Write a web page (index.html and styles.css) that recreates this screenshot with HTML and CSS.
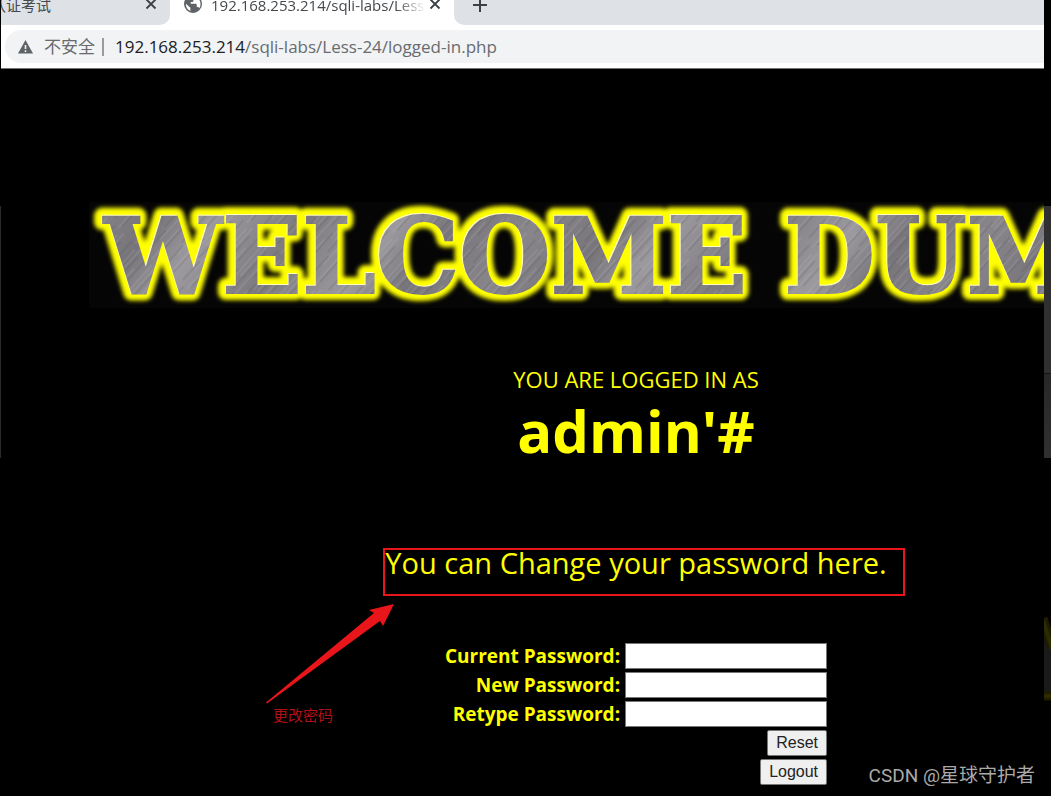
FILE: index.html
```html
<!DOCTYPE html>
<html lang="zh-CN">
<head>
<meta charset="utf-8">
<title>192.168.253.214/sqli-labs/Less-24/logged-in.php</title>
<link rel="stylesheet" href="styles.css">
</head>
<body>
<div class="desktop">
  <div class="edge-left"></div>
  <div class="browser">
    <header class="tabs">
      <div class="tab tab-first">
        <span class="tab-title">认证考试</span>
        <button class="icon-button" type="button" aria-label="Close tab"><svg width="12" height="12" viewBox="0 0 12 12"><path d="M1.500 1.500l9 9M10.500 1.500l-9 9" stroke="#3c4043" stroke-width="1.800"/></svg></button>
      </div>
      <div class="tab tab-active">
        <svg class="globe" width="18" height="18" viewBox="0 0 24 24"><path fill="#5f6368" d="M12 0a12 12 0 1 0 0 24 12 12 0 0 0 0-24zM2.500 11.500l6 5.500v4.300A10 10 0 0 1 2.500 11.500zM20.500 17.500c-.5-1-1.300-1.500-2.500-1.500h-1v-3c0-.8-.5-1.300-1.300-1.300H9V9.300h2.300c.7 0 1.200-.5 1.200-1.200V5.800h2.300c1.300 0 2.200-1 2.200-2.300A10 10 0 0 1 20.500 17.500z"/></svg>
        <span class="tab-title tab-url">192.168.253.214/sqli-labs/Less</span>
        <button class="icon-button" type="button" aria-label="Close tab"><svg width="12" height="12" viewBox="0 0 12 12"><path d="M1.500 1.500l9 9M10.500 1.500l-9 9" stroke="#3c4043" stroke-width="1.800"/></svg></button>
      </div>
      <div class="tab-rest">
        <button class="icon-button" type="button" aria-label="New tab"><svg width="14" height="14" viewBox="0 0 14 14"><path d="M7 0v14M0 7h14" stroke="#3c4043" stroke-width="2"/></svg></button>
      </div>
    </header>
    <div class="toolbar">
      <div class="address">
        <svg width="15" height="14" viewBox="0 0 15 14"><path fill="#5f6368" d="M7.500 0L15 13.500H0z"/><path d="M7.500 5v4M7.500 10.300v1.700" stroke="#f1f3f4" stroke-width="1.600"/></svg>
        <span class="insecure">不安全</span>
        <span class="divider"></span>
        <span class="url"><span class="host">192.168.253.214</span>/sqli-labs/Less-24/logged-in.php</span>
      </div>
    </div>
    <main class="page">
      <h1 class="banner">
        <svg width="1200" height="106" viewBox="0 0 1200 106" role="img" aria-label="WELCOME DUM">
          <defs>
            <linearGradient id="steel" x1="0" y1="0" x2="150" y2="110" gradientUnits="userSpaceOnUse" spreadMethod="reflect">
              <stop offset="0" stop-color="#88868b"/><stop offset=".35" stop-color="#77757a"/><stop offset=".6" stop-color="#9c9a9e"/><stop offset="1" stop-color="#7c7a7f"/>
            </linearGradient>
            <pattern id="brushed" width="1200" height="106" patternUnits="userSpaceOnUse">
              <rect width="1200" height="106" fill="url(#steel)"/>
              <rect width="1200" height="106" fill="url(#scratches)"/>
            </pattern>
            <pattern id="scratches" width="23" height="90" patternUnits="userSpaceOnUse" patternTransform="rotate(42)">
              <path d="M1 0v44M9 20v50M16 50v40M20 5v40" stroke="#c4c2c6" stroke-opacity=".3"/>
              <path d="M4 8v50M12 0v35M18 40v45M7 60v25" stroke="#4a484e" stroke-opacity=".3"/>
            </pattern>
            <filter id="soft" x="-5%" y="-30%" width="110%" height="160%"><feGaussianBlur stdDeviation="2"/></filter>
          </defs>
          <g class="banner-glow" filter="url(#soft)" aria-hidden="true"><text x="14" y="90">WELCOME</text><text x="694" y="90">DUM</text></g>
          <g class="banner-light" aria-hidden="true"><text x="14" y="90">WELCOME</text><text x="694" y="90">DUM</text></g>
          <g class="banner-face"><text x="15" y="91">WELCOME</text><text x="695" y="91">DUM</text></g>
        </svg>
      </h1>
      <section class="content">
        <p class="status">YOU ARE LOGGED IN AS</p>
        <p class="user">admin'#</p>
        <h2 class="prompt">You can Change your password here.
          <span class="highlight"></span>
          <svg class="arrow" width="130" height="102" viewBox="0 0 130 102"><path fill="#e8151b" d="M0 99.500L108 10 103 7 128 1 117 23 114 18 1 100.500z"/></svg>
          <span class="note">更改密码</span>
        </h2>
        <form class="form">
          <label for="current">Current Password:</label><input id="current" type="password">
          <label for="new">New Password:</label><input id="new" type="password">
          <label for="retype">Retype Password:</label><input id="retype" type="password">
          <button class="action" type="reset">Reset</button>
          <button class="action" type="button">Logout</button>
        </form>
      </section>
    </main>
  </div>
  <aside class="edge-right">
    <div class="panel"></div>
    <svg class="sliver" width="7" height="100" viewBox="0 0 7 100"><path d="M0 16L7 38V82H0z" fill="#1a1a1a"/><path d="M-1 8L8 37M0 86h7" stroke="#1c1c00" stroke-width="9"/><path d="M-1 10L8 39M0 86h7" stroke="#2c2c00" stroke-width="4"/></svg>
  </aside>
  <div class="watermark">CSDN @星球守护者</div>
</div>
</body>
</html>
```
FILE: styles.css
```css
* { box-sizing: border-box; }
body {
  margin: 0;
  background: #000;
  color: #ff0;
  font-family: "Open Sans", "Noto Sans CJK SC", sans-serif;
}
p, h1, h2 { margin: 0; }
.desktop {
  position: relative;
  display: grid;
  grid-template-columns: 1px minmax(0, 1fr) 7px;
  min-height: 100vh;
  overflow: hidden;
}
.edge-left { height: 252px; margin-top: 206px; background: #2a2a2a; }
.browser { overflow: hidden; }

.tabs { display: flex; height: 25px; background: #fff; color: #45494d; font-size: 15px; line-height: 20px; }
.tab { display: flex; align-items: flex-start; }
.tab-first {
  width: 169px;
  justify-content: space-between;
  padding-right: 13px;
  background: #dee1e6;
  border-bottom-right-radius: 10px;
}
.tab-first .tab-title { margin: -5px 0 0 -10px; }
.tab-active { width: 284px; padding: 0 13px 0 14px; }
.globe { flex: none; margin-top: -5px; }
.tab-url {
  flex: 1;
  margin: -5px 3px 0 9px;
  overflow: hidden;
  white-space: nowrap;
  -webkit-mask-image: linear-gradient(to right, #000 86%, transparent);
  mask-image: linear-gradient(to right, #000 86%, transparent);
}
.tab-rest { flex: 1; padding-left: 19px; background: #dee1e6; border-bottom-left-radius: 10px; }
.icon-button { display: block; flex: none; margin: -2px 0 0; padding: 0; border: 0; background: none; }
.icon-button svg { display: block; }

.toolbar { height: 44px; padding: 5px 0 5px 4px; background: #fff; border-bottom: 1px solid #777; }
.address {
  display: flex;
  align-items: center;
  height: 33px;
  padding-left: 13px;
  border-radius: 17px 0 0 17px;
  background: #f1f3f4;
  color: #686b6f;
  font-size: 17px;
  line-height: 24px;
  white-space: nowrap;
}
.insecure { margin-left: 11px; }
.divider { width: 2px; height: 18px; margin: 0 11px 0 7px; background: #999c9f; }
.host { color: #202124; }

.page { padding-top: 133px; }
.banner { height: 106px; margin-left: 88px; background: #050505; overflow: hidden; line-height: 0; }
.banner text { font: bold 105px "DejaVu Serif", serif; }
.banner-glow { fill: #ff0; stroke: #ff0; stroke-width: 16px; stroke-linejoin: round; }
.banner-light { fill: #ffffc0; stroke: #ffffc0; stroke-width: 2px; }
.banner-face { fill: url(#brushed); stroke: url(#brushed); stroke-width: 2px; }

.content { padding-left: 227px; text-align: center; }
.status { margin-top: 55px; font-size: 22px; line-height: 32px; }
.user { font-size: 58px; font-weight: 700; line-height: 72px; }
.prompt {
  position: relative;
  width: 504px;
  margin: 76px auto 0;
  font-size: 29px;
  font-weight: 400;
  line-height: 40px;
  white-space: nowrap;
}
.highlight { position: absolute; left: -1px; top: 5px; width: 522px; height: 48px; border: 2px solid #e8151b; }
.arrow { position: absolute; left: -118px; top: 60px; }
.note { position: absolute; left: -111px; top: 162px; color: #b01016; font-family: "Noto Sans CJK SC", sans-serif; font-size: 15px; line-height: 20px; }

.form {
  display: grid;
  grid-template-columns: auto 202px;
  gap: 3px 5px;
  justify-content: center;
  margin-top: 60px;
}
.form label { text-align: right; font-size: 19px; font-weight: 700; line-height: 26px; }
.form input { height: 26px; border: 1px solid #767676; background: #fff; }
.action {
  grid-column: 2;
  justify-self: end;
  height: 26px;
  padding: 0 8px;
  border: 1px solid #767676;
  border-radius: 2px;
  background: #efefef;
  color: #222;
  font: 16px "Liberation Sans", Arial, sans-serif;
}

.edge-right { padding-top: 206px; }
.panel { height: 252px; background: linear-gradient(#303030 167px, #11151c 167px, #11151c 168px, #282828 168px, #303030); }
.sliver { display: block; margin-top: 152px; }
.watermark {
  position: absolute;
  right: 16px;
  bottom: 6px;
  color: #aaa;
  font: 19px/28px Roboto, "Noto Sans CJK SC", sans-serif;
}
```
